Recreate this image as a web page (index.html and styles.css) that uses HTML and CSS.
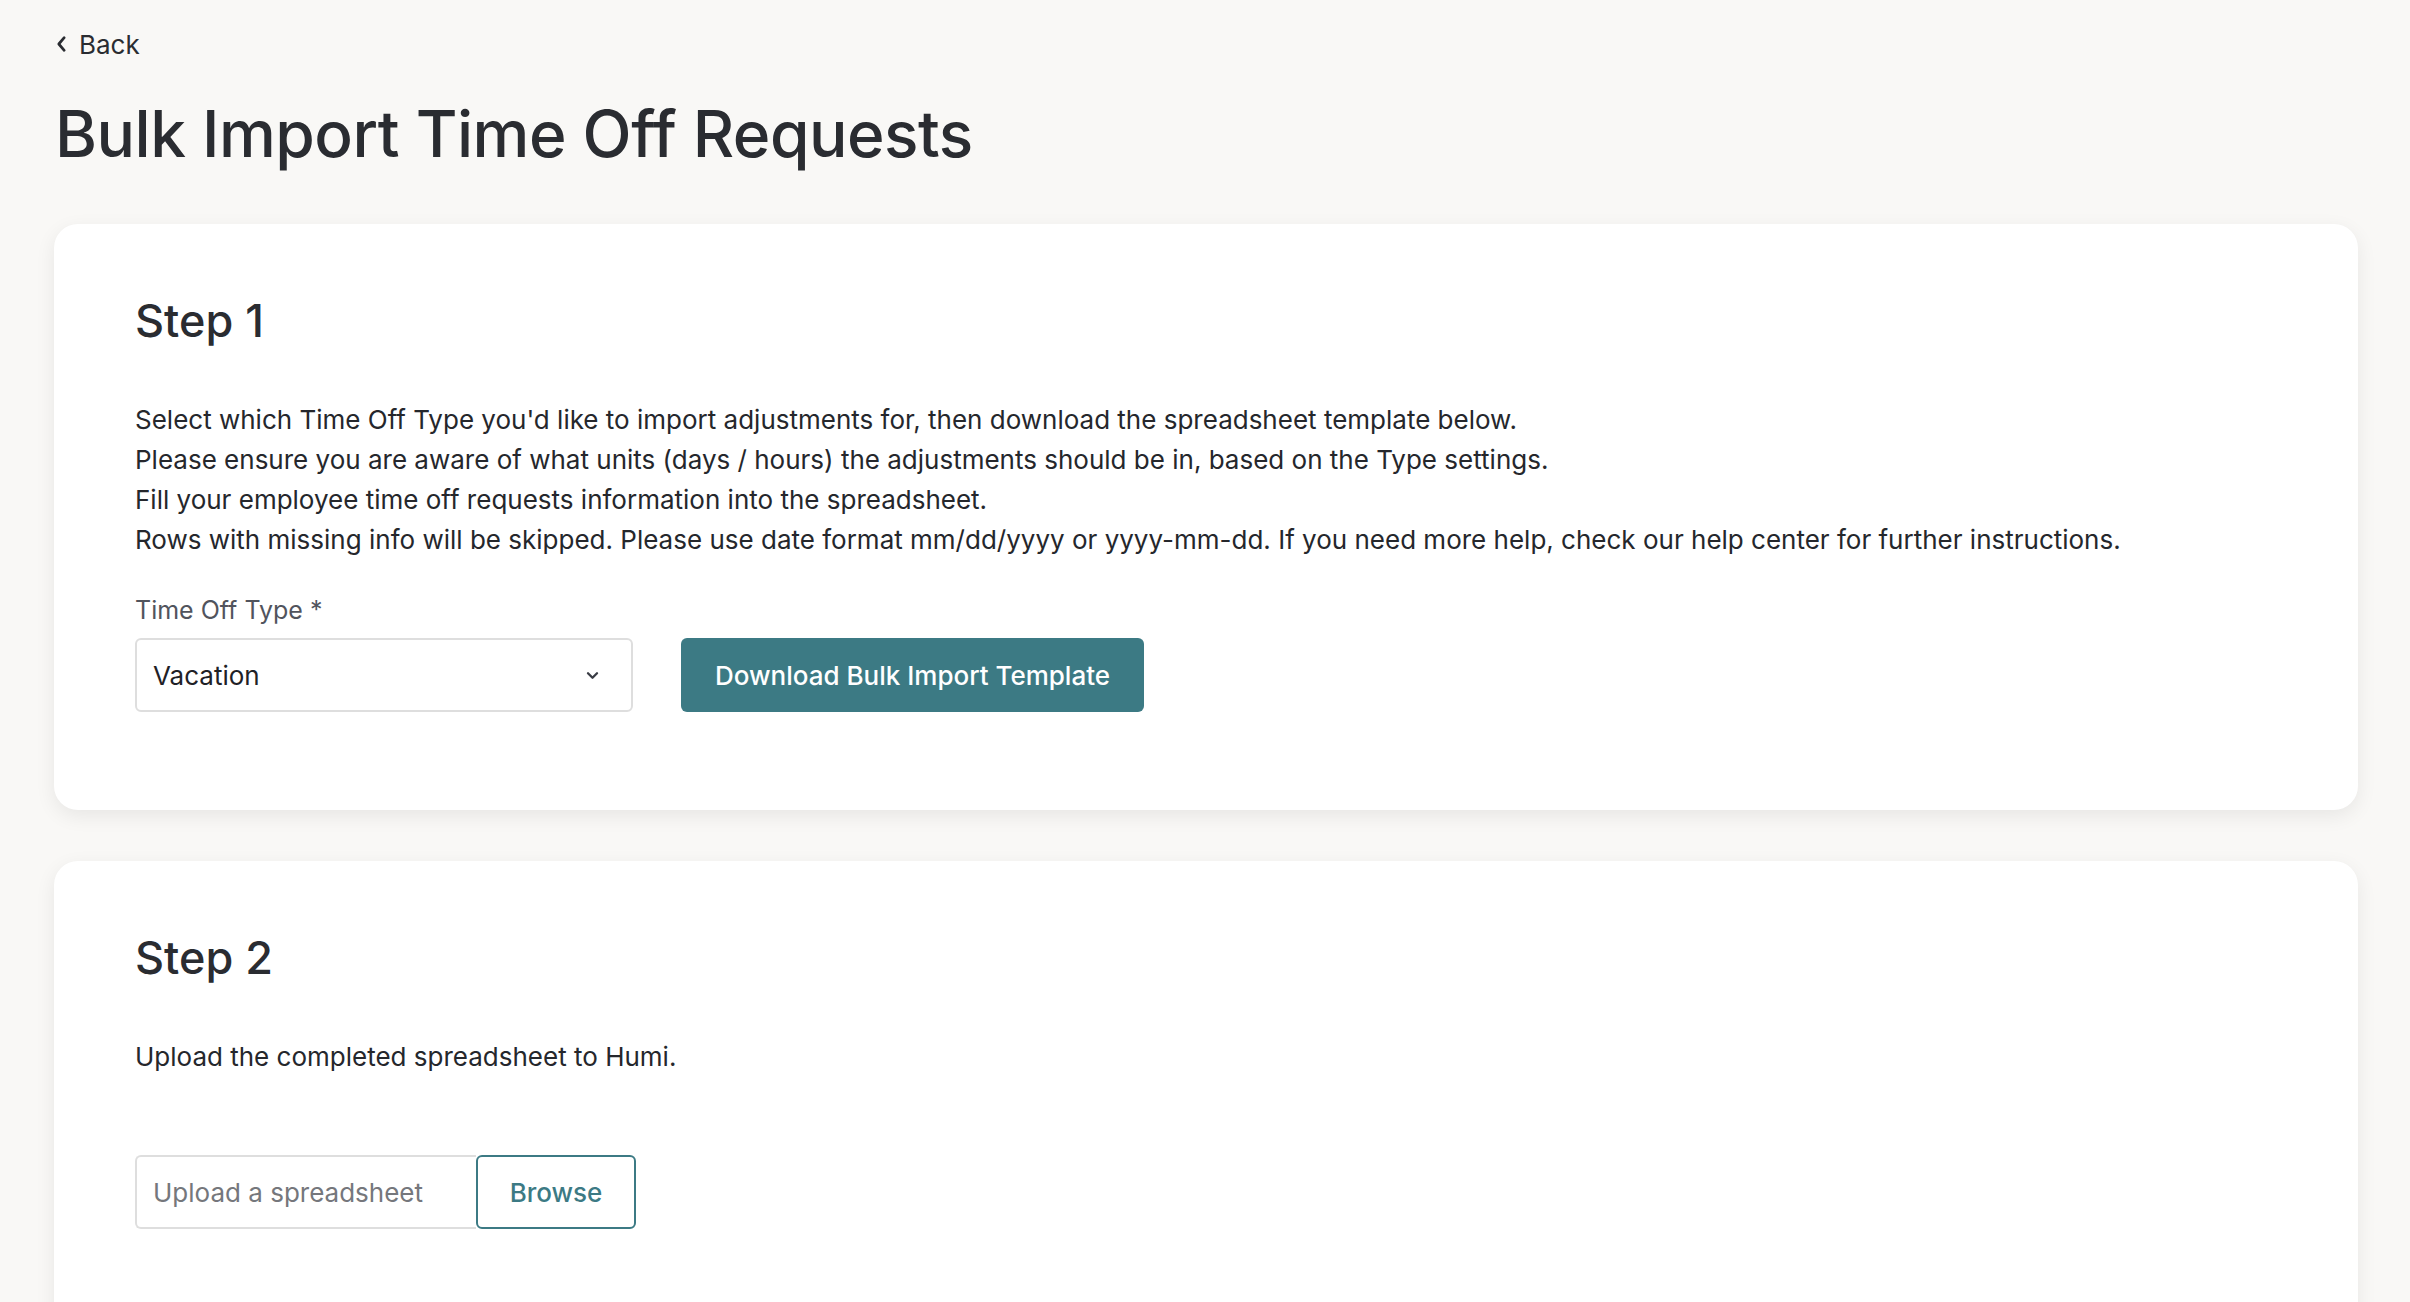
FILE: index.html
```html
<!DOCTYPE html>
<html lang="en">
<head>
<meta charset="utf-8">
<title>Bulk Import Time Off Requests</title>
<link rel="stylesheet" href="styles.css">
</head>
<body>
<div class="page">
  <a class="back" href="#">
    <svg class="back-icon" viewBox="0 0 12 20" width="11" height="18" aria-hidden="true"><path d="M9 3 L3 10 L9 17" fill="none" stroke="#2a2c31" stroke-width="3" stroke-linecap="round" stroke-linejoin="round"/></svg>
    <span>Back</span>
  </a>
  <h1 class="title">Bulk Import Time Off Requests</h1>

  <section class="card">
    <h2 class="step">Step 1</h2>
    <div class="desc">
      <p>Select which Time Off Type you'd like to import adjustments for, then download the spreadsheet template below.</p>
      <p>Please ensure you are aware of what units (days / hours) the adjustments should be in, based on the Type settings.</p>
      <p>Fill your employee time off requests information into the spreadsheet.</p>
      <p>Rows with missing info will be skipped. Please use date format mm/dd/yyyy or yyyy-mm-dd. If you need more help, check our help center for further instructions.</p>
    </div>
    <div class="field-label">Time Off Type *</div>
    <div class="row">
      <div class="select">
        <span>Vacation</span>
        <svg class="select-icon" viewBox="0 0 14 10" width="13" height="9" aria-hidden="true"><path d="M2 2.5 L7 7.5 L12 2.5" fill="none" stroke="#3a3d45" stroke-width="2.6" stroke-linecap="round" stroke-linejoin="round"/></svg>
      </div>
      <button class="btn-primary" type="button">Download Bulk Import Template</button>
    </div>
  </section>

  <section class="card card-last">
    <h2 class="step">Step 2</h2>
    <div class="desc">
      <p>Upload the completed spreadsheet to Humi.</p>
    </div>
    <div class="upload">
      <div class="upload-input">Upload a spreadsheet</div>
      <button class="btn-outline" type="button">Browse</button>
    </div>
  </section>
</div>
</body>
</html>
```
FILE: styles.css
```css
html, body {
  margin: 0;
  padding: 0;
}
body {
  background: #f9f8f6;
  font-family: "Inter", "Liberation Sans", sans-serif;
  color: #2a2c31;
  height: 1302px;
  overflow: hidden;
}
.page {
  padding: 25px 52px 0 54px;
}
.back {
  display: flex;
  align-items: center;
  gap: 12px;
  height: 38px;
  padding-left: 2px;
  font-size: 26px;
  color: #2a2c31;
  text-decoration: none;
}
.title {
  margin: 31px 0 50px 1px;
  font-size: 64px;
  line-height: 80px;
  font-weight: 500;
  letter-spacing: -0.5px;
  color: #2a2c31;
}
.card {
  background: #ffffff;
  border-radius: 24px;
  box-shadow: 0 6px 20px rgba(0, 0, 0, 0.075);
  padding: 70px 80px 98px 81px;
  margin-bottom: 51px;
}
.card-last {
  padding-bottom: 120px;
}
.step {
  margin: 0 0 52px;
  font-size: 45px;
  line-height: 54px;
  font-weight: 500;
  color: #2a2c31;
}
.desc p {
  margin: 0;
  font-size: 26px;
  line-height: 40px;
  color: #25272c;
}
.field-label {
  margin-top: 33px;
  font-size: 25px;
  line-height: 34px;
  color: #51545d;
}
.row {
  display: flex;
  align-items: center;
  gap: 48px;
  margin-top: 11px;
}
.select {
  box-sizing: border-box;
  width: 498px;
  height: 74px;
  border: 2px solid #dedede;
  border-radius: 6px;
  display: flex;
  align-items: center;
  justify-content: space-between;
  padding: 0 32px 0 16px;
  font-size: 26px;
  color: #1f2126;
}
.btn-primary {
  box-sizing: border-box;
  height: 74px;
  width: 463px;
  border: none;
  border-radius: 6px;
  background: #3c7a84;
  color: #ffffff;
  font-family: inherit;
  font-size: 26px;
  font-weight: 500;
}
.upload {
  display: flex;
  margin-top: 78px;
}
.upload-input {
  box-sizing: border-box;
  width: 341px;
  height: 74px;
  border: 2px solid #dedede;
  border-right: none;
  border-radius: 6px 0 0 6px;
  display: flex;
  align-items: center;
  padding-left: 16px;
  font-size: 26px;
  color: #75777c;
}
.btn-outline {
  box-sizing: border-box;
  width: 160px;
  height: 74px;
  border: 2px solid #3c7a84;
  border-radius: 6px;
  background: #ffffff;
  color: #3c7a84;
  font-family: inherit;
  font-size: 26px;
  font-weight: 500;
}
```
